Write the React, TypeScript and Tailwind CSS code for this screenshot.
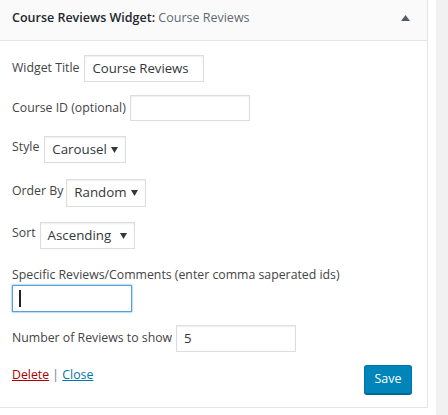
import React from "react";

const font = { fontFamily: '"Open Sans", "Noto Sans", sans-serif' };

function Select({ value, width }: { value: string; width: number }) {
  return (
    <div
      className="flex h-full items-center justify-between border border-[#dddddd] bg-white pl-[7px] pr-[7px] text-[13.3px] text-[#32373c] shadow-[inset_0_1px_2px_rgba(0,0,0,0.07)]"
      style={{ width }}
    >
      <span>{value}</span>
      <svg width="7" height="6" viewBox="0 0 7 6">
        <path d="M0 0 L7 0 L3.5 6 Z" fill="#32373c" />
      </svg>
    </div>
  );
}

function Input({ value, width, focused }: { value?: string; width: number; focused?: boolean }) {
  return (
    <div
      className={
        "flex h-full items-center bg-white pl-[7px] text-[13.2px] text-[#32373c] " +
        (focused
          ? "border border-[#5b9dd9] shadow-[0_0_2px_rgba(30,140,190,0.8)]"
          : "border border-[#dddddd] shadow-[inset_0_1px_2px_rgba(0,0,0,0.07)]")
      }
      style={{ width }}
    >
      {focused ? <span className="ml-[-1px] block h-[17px] w-[2px] bg-[#222]" /> : value}
    </div>
  );
}

export default function App() {
  return (
    <div className="flex h-[415px] w-[448px] bg-white text-[12.3px] text-[#444]" style={font}>
      <div className="flex h-[408px] w-[428px] flex-col border-b border-r border-[#e5e5e5] bg-white">
        <div className="flex h-[41px] shrink-0 items-center justify-between border-b border-[#e5e5e5] bg-[#fafafa] pl-[12px] pr-[17px]">
          <div className="mt-[-3px] text-[12.5px] text-[#23282d]">
            <span className="font-semibold">Course Reviews Widget:</span>{" "}
            <span className="text-[#606a73]">Course Reviews</span>
          </div>
          <svg width="9" height="6" viewBox="0 0 9 6" className="mt-[-5px]">
            <path d="M0 6 L4.5 0 L9 6 Z" fill="#555d66" />
          </svg>
        </div>
        <div className="flex flex-col px-[12px]">
          <div className="mt-[14px] flex h-[27px] items-center gap-[5px]">
            <span>Widget Title</span>
            <Input value="Course Reviews" width={120} />
          </div>
          <div className="mt-[13px] flex h-[26px] items-center gap-[4px]">
            <span>Course ID (optional)</span>
            <Input width={120} />
          </div>
          <div className="mt-[15px] flex h-[27px] items-center gap-[5px]">
            <span className="mt-[-4px]">Style</span>
            <Select value="Carousel" width={82} />
          </div>
          <div className="mt-[16px] flex h-[28px] items-center gap-[3px]">
            <span className="mt-[-4px]">Order By</span>
            <Select value="Random" width={80} />
          </div>
          <div className="mt-[15px] flex h-[27px] items-center gap-[4px]">
            <span className="mt-[-4px]">Sort</span>
            <Select value="Ascending" width={95} />
          </div>
          <div className="mt-[17px] h-[18px] leading-[18px]">
            Specific Reviews/Comments (enter comma saperated ids)
          </div>
          <div className="mt-[1px] flex h-[27px]">
            <Input width={120} focused />
          </div>
          <div className="mt-[13px] flex h-[27px] items-center gap-[4px]">
            <span>Number of Reviews to show</span>
            <Input value="5" width={120} />
          </div>
          <div className="mt-[13px] flex h-[29px] items-start justify-between pr-[3px]">
            <div className="mt-[1px] leading-[18px]">
              <a className="text-[#a00] underline">Delete</a>
              <span className="text-[#72777c]"> | </span>
              <a className="text-[#0073aa] underline">Close</a>
            </div>
            <button className="flex h-[29px] w-[48px] items-center justify-center rounded-[3px] border border-[#0073aa] border-b-[#006799] bg-[#0085ba] text-[12.5px] text-white shadow-[0_1px_0_#006799]">
              Save
            </button>
          </div>
        </div>
      </div>
      <div className="w-[8px]" />
      <div className="flex-1 bg-[#f1f1f1]" />
    </div>
  );
}
